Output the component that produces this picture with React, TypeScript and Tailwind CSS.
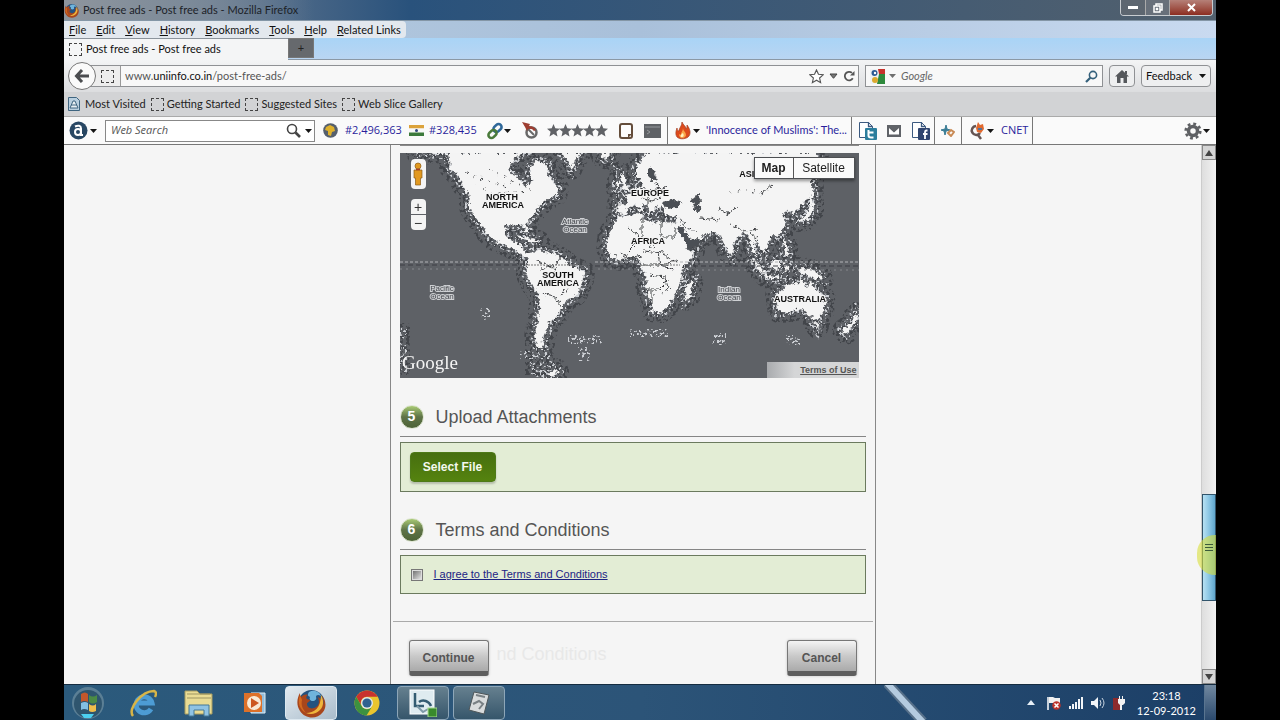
import type { ReactNode } from "react";

const UI = "font-['Lato','Open_Sans',sans-serif]";
const WIDE = "font-['Open_Sans','Noto_Sans',sans-serif]";
const ARIAL = "font-['Liberation_Sans',Arial,sans-serif]";

const menus = ["File", "Edit", "View", "History", "Bookmarks", "Tools", "Help", "Related Links"];
const bookmarks = ["Getting Started", "Suggested Sites", "Web Slice Gallery"];

function Caret({ className = "" }: { className?: string }) {
  return (
    <svg className={`shrink-0 ${className}`} width="7" height="4" viewBox="0 0 7 4">
      <path d="M0 0h7L3.500 4z" fill="#151515" />
    </svg>
  );
}

function Dashed() {
  return <span className="block h-[13px] w-[13px] shrink-0 border border-dashed border-[#444]" />;
}

function Magnifier({ color = "#444" }: { color?: string }) {
  return (
    <svg width="15" height="15" viewBox="0 0 15 15" fill="none" stroke={color}>
      <circle cx="6" cy="6" r="4.500" strokeWidth="1.600" />
      <path d="M9.500 9.500l4.500 4.500" strokeWidth="2.600" />
    </svg>
  );
}

function FirefoxLogo({ size }: { size: number }) {
  return (
    <svg width={size} height={size} viewBox="0 0 30 30">
      <circle cx="15.500" cy="15" r="13" fill="#24527f" />
      <path d="M13 4c5-3 11 0 12 4-3-2-5-1-5 1 1 2-1 4-3 4-3 0-4-2-3-4-2-1-3-2-1-5z" fill="#6fb4dc" />
      <path d="M4 5c0 2 0 3 1 4 2-2 4-3 7-2-2 1-2 3-1 4l3 1c0 2-3 2-3 4 0 4 5 6 9 3 4-2 3-7 2-10 4 2 5 5 5 8 1-4 0-7-2-10 5 4 6 12 2 17-6 8-18 7-23-1C0 17 1 10 4 5z" fill="#a8461c" />
      <path d="M25 7c3 5 3 11-1 15-4 4-9 5-14 3 8 0 15-5 15-18z" fill="#efb63c" />
      <path d="M4 7c-3 8 0 15 6 18-4-5-5-8-4-13z" fill="#d2691f" />
    </svg>
  );
}

function ChromeLogo() {
  return (
    <svg width="26" height="26" viewBox="0 0 26 26">
      <circle cx="13" cy="13" r="12.500" fill="#e9c52e" />
      <path d="M2.200 6.700A12.500 12.500 0 0 1 23.800 6.700H13A6.200 6.200 0 0 0 7.600 16z" fill="#c8332f" />
      <path d="M2.200 6.700A12.500 12.500 0 0 0 12.500 25.500L18.400 16A6.200 6.200 0 0 1 7.600 16z" fill="#3d9140" />
      <circle cx="13" cy="13" r="6" fill="#dfe7ea" />
      <circle cx="13" cy="13" r="4.600" fill="#2f6190" />
    </svg>
  );
}

function Flame({ size = 18 }: { size?: number }) {
  return (
    <svg width={size} height={size} viewBox="0 0 18 18">
      <path d="M8 0c1 3 4 4 4 7 1-1 1-2 1-4 3 4 4 8 2 11s-9 4-12 1C1 12 2 9 3 6c0 2 1 3 2 3C5 6 8 4 8 0z" fill="#dd4a1c" stroke="#a33d20" strokeWidth=".7" />
      <path d="M9 6c0 3 3 4 3 7 0 2-2 3-4 3s-3-2-3-4c1 1 2 1 2 0 0-2 2-3 2-6z" fill="#f9a548" />
      <path d="M9 11c1 2 1 4-1 4s-2-2 1-4z" fill="#fff1c2" />
    </svg>
  );
}

function SharePage({ color, children }: { color: string; children: ReactNode }) {
  return (
    <svg width="19" height="19" viewBox="0 0 19 19">
      <path d="M1.500 1.500h9l4 4v11h-13z" fill="#fff" stroke="#3c5a80" />
      <path d="M10.500 1v4.500h4" fill="none" stroke="#3c5a80" strokeWidth="1.300" />
      <rect x="7" y="7" width="12" height="12" rx="1" fill={color} />
      {children}
    </svg>
  );
}

function WorldMap() {
  return (
    <svg className="block h-[225px] w-full bg-[#5e6166]" viewBox="0 0 459 225" preserveAspectRatio="xMidYMid slice" role="img" aria-label="World map">
      <defs>
        <filter id="coast" x="0" y="0" width="459" height="225" filterUnits="userSpaceOnUse">
          <feTurbulence type="fractalNoise" baseFrequency="0.28" numOctaves="3" seed="4" result="n" />
          <feDisplacementMap in="SourceGraphic" in2="n" scale="7" xChannelSelector="R" yChannelSelector="G" />
        </filter>
        <filter id="speckle" x="0" y="0" width="459" height="225" filterUnits="userSpaceOnUse" colorInterpolationFilters="sRGB">
          <feTurbulence type="fractalNoise" baseFrequency="0.3" numOctaves="2" seed="9" />
          <feColorMatrix values="0 0 0 0 .26  0 0 0 0 .27  0 0 0 0 .29  12 0 0 0 -6" result="d" />
          <feComposite in="d" in2="SourceGraphic" operator="in" />
        </filter>
        <filter id="foam" x="0" y="0" width="459" height="225" filterUnits="userSpaceOnUse" colorInterpolationFilters="sRGB">
          <feTurbulence type="fractalNoise" baseFrequency="0.4" numOctaves="2" seed="21" />
          <feColorMatrix values="0 0 0 0 .8  0 0 0 0 .81  0 0 0 0 .83  0 12 0 0 -6.600" result="d" />
          <feComposite in="d" in2="SourceGraphic" operator="in" />
        </filter>
        <g id="west">
          <path d="M80 24L175 28L180 70L205 95L220 125L238 150L240 190L255 215L270 235L290 265L310 285L345 300L375 315L400 335L415 345L428 330L405 320L395 300L365 288L350 275L342 250L350 240L375 242L398 238L405 265L415 265L408 235L430 210L440 190L470 165L500 150L505 130L490 110L475 90L470 55L440 48L425 60L420 85L425 110L405 125L385 100L362 85L357 60L375 40L400 24z" />
          <path d="M515 24L528 40L545 72L555 50L572 24z" />
          <path d="M412 350L425 322L445 318L490 325L530 350L540 362L583 380L580 405L560 450L530 465L515 490L500 515L480 530L470 560L455 590L462 615L440 600L435 570L445 520L450 455L425 420L410 390z" />
          <path d="M632 24L660 24L655 42L638 40zM380 270L420 278L450 290L430 292L395 282zM470 690L500 672L505 680L485 698z" />
        </g>
        <g id="east">
          <path d="M-5 215L65 205L70 222L100 235L120 228L160 235L170 255L190 300L200 320L223 318L210 345L185 375L185 410L165 445L145 485L125 502L98 500L92 470L78 430L80 400L62 365L60 345L30 335L0 345L-25 340L-40 310L-35 270z" />
          <path d="M205 415L218 410L210 455L197 465L195 435z" />
          <path d="M-8 205L-8 178L20 178L22 165L12 150L35 145L45 130L70 118L60 108L48 95L48 70L65 40L85 24L590 24L600 60L570 120L570 150L545 180L520 208L512 195L490 205L495 245L480 268L450 278L445 300L430 325L415 300L403 292L412 335L400 325L390 290L380 265L365 265L345 290L335 332L322 320L305 275L285 262L250 262L250 275L215 308L190 312L160 240L172 215L135 210L130 192L108 182L102 200L85 205L80 180L65 175L72 198L60 200L45 180L25 190L15 208z" />
          <path d="M0 85L15 95L25 130L5 142L8 115zM-10 115L0 112L0 130L-10 132z" />
          <path d="M468 450L510 415L525 420L545 405L555 412L560 430L570 405L585 430L615 460L610 500L590 525L565 510L545 490L510 500L475 502zM583 535L598 535L592 550z" />
          <path d="M706 503L714 520L678 567L668 556L695 530z" />
          <path d="M392 340L415 355L440 388L425 385zM430 388L480 395L485 402L440 398zM452 350L482 345L475 378L455 372zM490 355L510 365L495 382zM528 368L570 372L605 392L608 405L570 395L540 385zM488 285L500 290L505 335L495 325z" />
          <path d="M570 110L580 130L580 200L560 225L528 230L562 205L570 180z" />
        </g>
      </defs>
      <g filter="url(#speckle)" stroke="#000" strokeWidth="64" strokeLinejoin="round">
        <use href="#west" transform="translate(-10 -8) scale(.3333)" />
        <use href="#east" transform="translate(220 -8) scale(.3333)" />
        <path stroke="none" d="M125 190h30v32h-30zM0 170h10v52H0z" />
      </g>
      <g filter="url(#foam)" stroke="#000" strokeWidth="30">
        <use href="#west" transform="translate(-10 -8) scale(.3333)" />
        <use href="#east" transform="translate(220 -8) scale(.3333)" />
        <path stroke="none" d="M120 198h30v8h-30zM168 182h34v9h-34zM178 194h12v14h-12zM230 176h38v8h-38zM312 180h14v12h-14zM386 182h14v10h-14zM80 155h10v12h-10zM0 175h7v45H0zM130 208h25v16h-25z" />
      </g>
      <g filter="url(#coast)" fill="#f4f4f4">
        <use href="#west" transform="translate(-10 -8) scale(.3333)" />
        <use href="#east" transform="translate(220 -8) scale(.3333)" />
        <g fill="#4c4f54">
          <path d="M262 49l12-3 8 3-3 5-14 1zM291 45l7-3 3 4-2 6 3 5-6 1-3-6zM248 14l6 3 3 10-5 1-4-6z" />
          <path d="M276 75l10 15 3 8 14-9-4-3-8 1-10-14z" />
        </g>
      </g>
      <g filter="url(#coast)" fill="none" stroke="#3f4144" strokeWidth="1">
        <path d="M228 75l26 20M242 64v20l-14 14M261 62v22h14v-10M243 98l20 2 12 10M258 100l2 12 12 4M240 112h25l12-5M250 122l15 2 4 14M245 136h14l8-8M252 136v14M262 140l8-6M220 100l8 6 14-3M140 116l16-4 6-8M142 140l12 3 8 12M160 142l8-6M148 113l8 3M136 108l10 4" />
        <path d="M238 34l12 4 16-4M240 45l12 3 14-6M248 42v12M256 30l4 16M330 72l14 6 14-2M352 80l6 9M318 55l10 6 10-8M300 65l20 2M280 65l6 10 12 4M362 40l10-8" />
        <path strokeDasharray="2 6" d="M66 20l40 14 14-12M75 32l22 8 34-2M90 16l30 16M215 102l12 6M218 106l14-6M330 40l16-4 18 6" />
      </g>
      <g stroke="#b2b4b7" fill="none">
        <path d="M0 109H125M195 109H240M280 109H459" strokeDasharray="3 2" />
        <path d="M0 112H122M195 113H240M285 113H459" stroke="#3c3f44" strokeDasharray="5 3" />
        <path d="M125 112H180M240 112H280" stroke="#777" strokeDasharray="2 1" />
        <path d="M0 116H123M198 116H238M284 117H459" stroke="#85888c" strokeDasharray="2 4" />
      </g>
      <g className="font-['Liberation_Sans',Arial,sans-serif]" fontSize="9" fontWeight="700" fill="#111" textAnchor="middle" stroke="#f4f4f4" strokeWidth="2" paintOrder="stroke">
        <text x="102" y="47">NORTH</text>
        <text x="103" y="55">AMERICA</text>
        <text x="158" y="125">SOUTH</text>
        <text x="158" y="133">AMERICA</text>
        <text x="250" y="43">EUROPE</text>
        <text x="248" y="91">AFRICA</text>
        <text x="350" y="24">ASIA</text>
        <text x="400" y="149">AUSTRALIA</text>
      </g>
      <g className="font-['Liberation_Sans',Arial,sans-serif]" fontSize="8" fill="#44474c" textAnchor="middle" stroke="#cfd1d4" strokeWidth="2" paintOrder="stroke">
        <text x="175" y="71">Atlantic</text>
        <text x="175" y="79">Ocean</text>
        <text x="42" y="138">Pacific</text>
        <text x="42" y="146">Ocean</text>
        <text x="329" y="139">Indian</text>
        <text x="329" y="147">Ocean</text>
      </g>
      <text x="2" y="216" className="font-['Liberation_Serif',serif]" fontSize="19" fill="#f4f4f4">Google</text>
    </svg>
  );
}

function SectionTitle({ number, children }: { number: number; children: ReactNode }) {
  return (
    <div className="flex h-10 items-center gap-3 border-b border-[#858585]">
      <span className="flex h-6 w-6 items-center justify-center rounded-full border border-[#dfe6d3] bg-linear-to-b from-[#a9cb74] via-[#5e7347] to-[#4d6337] text-[14px] font-bold text-white">{number}</span>
      <h2 className="text-[18px] leading-6 text-[#555]">{children}</h2>
    </div>
  );
}

function FormButton({ className, children }: { className: string; children: ReactNode }) {
  return (
    <button className={`h-9 rounded-[3px] border border-b-[5px] border-[#777] border-b-[#5e5e5e] bg-linear-to-b from-[#f4f4f4] via-[#c9c9c9] to-[#aaa] pt-1 shadow-[0_0_3px_#0003] ${className}`}>{children}</button>
  );
}

function TaskButton({ label, active, boxed, children }: { label: string; active?: boolean; boxed?: boolean; children: ReactNode }) {
  const look = active
    ? "border border-[#dce8f0] bg-linear-to-br from-[#e2eaf0] to-[#a9bccb] rounded-sm"
    : boxed
      ? "border border-[#8da6b8] bg-linear-to-b from-[#66808f] to-[#36566b] rounded-sm"
      : "";
  return (
    <button aria-label={label} className={`flex h-[34px] w-[52px] items-center justify-center ${look}`}>
      {children}
    </button>
  );
}

function BrowserChrome() {
  return (
    <header className={`${UI} text-[11px] text-[#111]`}>
      <div className="flex h-5 items-start justify-between bg-linear-to-r from-[#8b929b] via-[#29527c] via-30% to-[#52606d]">
        <div className="flex h-5 items-center gap-1 bg-linear-to-r from-[#8e959d] via-[#7c8a99] to-transparent pr-4 text-[#1c2228]">
          <FirefoxLogo size={15} />
          <span>Post free ads - Post free ads - Mozilla Firefox</span>
        </div>
        <div className="mr-[3px] flex h-4 overflow-hidden rounded-b-sm border border-t-0 border-[#c8ccd0] text-white">
          <button aria-label="Minimize" className="flex w-[25px] items-center justify-center border-r border-[#aaa] bg-[#5d6670]">
            <span className="h-[3px] w-[10px] bg-white" />
          </button>
          <button aria-label="Restore" className="flex w-6 items-center justify-center border-r border-[#aaa] bg-[#68707a]">
            <svg width="10" height="10" viewBox="0 0 10 10" fill="none" stroke="#fff" strokeWidth="1.500"><path d="M3 3V1h6v6H7M1 3h6v6H1zM3.500 5.500h1v1h-1z" /></svg>
          </button>
          <button aria-label="Close" className="flex w-[42px] items-center justify-center bg-linear-to-b from-[#b58078] to-[#8c2c20]">
            <svg width="9" height="9" viewBox="0 0 9 9" stroke="#fff" strokeWidth="2"><path d="M1 1l7 7M8 1L1 8" /></svg>
          </button>
        </div>
      </div>

      <div className="flex h-[18px] border-t border-[#8496a6] bg-linear-to-r from-[#b5cbe0] via-[#a9c0da] to-[#c9daf0]">
        <nav className="flex items-center gap-[10px] rounded-r bg-[#e3e8ee] pr-[5px] pl-[5px]">
          {menus.map((m) => (
            <button key={m} className="leading-4">
              <span className="underline">{m[0]}</span>
              {m.slice(1)}
            </button>
          ))}
        </nav>
      </div>

      <div className="flex h-[22px] border-b border-[#8b98a5] bg-linear-to-b from-[#a9d4f6] to-[#b9d5f2]">
        <div className="flex h-[22px] w-56 items-center gap-1 border-t border-[#8c949c] bg-[#f4f5f6] pl-[5px]">
          <Dashed />
          <span>Post free ads - Post free ads</span>
        </div>
        <button aria-label="New tab" className="h-5 w-[26px] border border-[#777] bg-[#66696d] leading-4 text-[#222]">+</button>
      </div>

      <div className="flex h-8 items-center bg-linear-to-b from-[#f3f4f5] to-[#dcdddf] pr-[5px] pl-1">
        <button aria-label="Back" className="z-10 -mr-3 flex h-7 w-7 shrink-0 items-center justify-center rounded-full border border-[#777] bg-[#fafafa]">
          <svg width="16" height="14" viewBox="0 0 16 14" fill="none" stroke="#4b4d50" strokeWidth="3"><path d="M8 1L2.500 7L8 13M3 7h12" /></svg>
        </button>
        <div className="flex h-[22px] flex-1 items-center border border-[#8f9194] bg-[#f8f8f8]">
          <span className="flex h-full w-9 items-center justify-end border-r border-[#999] bg-[#ededed] pr-[6px]"><Dashed /></span>
          <div className="flex-1 pl-1 text-[#555]">www.<span className="text-[#111]">uniinfo.co.in</span>/post-free-ads/</div>
          <div className="flex items-center gap-[5px] pr-[3px]">
            <svg width="15" height="15" viewBox="0 0 16 16" fill="#fff" stroke="#555" strokeWidth="1.200"><path d="M8 1l2.100 4.700 5 .5-3.800 3.400 1.100 5L8 12l-4.400 2.600 1.100-5L.9 6.200l5-.5z" /></svg>
            <svg width="9" height="6" viewBox="0 0 9 6" fill="#777" stroke="#444"><path d="M1 1h7L4.500 5.300z" /></svg>
            <svg width="12" height="12" viewBox="0 0 12 12" fill="none" stroke="#555" strokeWidth="1.800"><path d="M9.800 8.300A4.300 4.300 0 1 1 9 2.900" /><path d="M7 5.500h4.500V1z" fill="#555" stroke="none" /></svg>
          </div>
        </div>
        <div className="ml-[6px] flex h-[22px] w-[238px] items-center border border-[#8f9194] bg-[#f8f8f8] px-1">
          <svg width="15" height="15" viewBox="0 0 15 15">
            <rect width="15" height="15" fill="#eef2f5" />
            <path d="M8 0h7v5H9z" fill="#c8322c" /><path d="M9 5h6v10H7z" fill="#2f8a3d" /><circle cx="4.500" cy="4" r="3" fill="#2c5b94" /><circle cx="5" cy="11" r="3" fill="#dba92f" /><circle cx="5" cy="4" r="1.200" fill="#fff" />
          </svg>
          <Caret className="ml-1 opacity-60" />
          <input aria-label="Search Google" placeholder="Google" className="ml-[5px] min-w-0 flex-1 bg-transparent italic outline-none placeholder:text-[#666]" />
          <svg width="13" height="13" viewBox="0 0 13 13" fill="none" stroke="#35617c"><circle cx="8" cy="5" r="3.600" strokeWidth="1.600" /><path d="M5.300 7.700L1 12" strokeWidth="2.200" /></svg>
        </div>
        <button aria-label="Home" className="ml-[6px] flex h-[22px] w-[26px] items-center justify-center rounded-sm border border-[#8f9194] bg-[#eeeff0]">
          <svg width="14" height="13" viewBox="0 0 14 13" fill="#55585c"><path d="M7 0l7 6.500h-2V13H8.500V8h-3v5H2V6.500H0z" /><path d="M10 1h2v3h-2z" /></svg>
        </button>
        <button className="ml-[6px] flex h-[22px] w-[70px] items-center justify-between rounded-sm border border-[#8f9194] bg-[#eeeff0] px-1">
          Feedback <Caret />
        </button>
      </div>

      <div className="flex h-6 items-center bg-[#d2d3d5] pl-1 text-[#222]">
        <svg width="12" height="14" viewBox="0 0 12 14"><path d="M.5 .5h8l3 3v10H.5z" fill="#b9cfdf" stroke="#3f6580" /><path d="M2 11l3-7h2l3 7zM3 8h6" fill="#e7eef2" stroke="#3f6580" /></svg>
        <a href="#most-visited" className="ml-[5px]">Most Visited</a>
        {bookmarks.map((b) => (
          <a key={b} href="#bookmark" className="ml-[5px] flex items-center gap-[3px]"><Dashed />{b}</a>
        ))}
      </div>

      <div className="flex h-[29px] items-center border-t border-b border-t-[#aaa] border-b-[#777] bg-[#fafafa] pr-[6px] pl-[5px] text-[#2a1f9c]">
        <svg width="19" height="19" viewBox="0 0 19 19"><circle cx="9.500" cy="9.500" r="9" fill="#284763" /><circle cx="9" cy="11" r="3" fill="none" stroke="#fff" strokeWidth="2" /><path d="M6 5.500c3-1.500 6-1 6 2V14h2" fill="none" stroke="#fff" strokeWidth="2" /></svg>
        <Caret className="ml-[2px]" />
        <div className="ml-2 flex h-[22px] w-[210px] items-center border border-[#888] bg-white pr-[2px] pl-[5px]">
          <input aria-label="Web Search" placeholder="Web Search" className={`${WIDE} min-w-0 flex-1 bg-transparent italic outline-none placeholder:text-[#555]`} />
          <Magnifier />
          <Caret className="ml-1" />
        </div>
        <svg className="ml-2" width="15" height="15" viewBox="0 0 15 15"><circle cx="7.500" cy="7.500" r="7.300" fill="#555f6c" /><path d="M3 4l4-2 4 2 1 4-3 1-1 4-3-1V8L2 7z" fill="#dfb12c" /></svg>
        <a href="#rank" className={`${WIDE} ml-[7px] w-[60px] whitespace-nowrap`}>#2,496,363</a>
        <svg className="ml-1" width="15" height="11" viewBox="0 0 15 11"><path d="M0 0h15v3.500H0z" fill="#dca33b" /><path d="M0 3.500h15v4H0z" fill="#f8f8f8" /><path d="M0 7.500h15V11H0z" fill="#3c7a3b" /><circle cx="7.500" cy="5.500" r="1.500" fill="#34497e" /></svg>
        <a href="#local-rank" className={`${WIDE} ml-[5px] w-[49px] whitespace-nowrap`}>#328,435</a>
        <svg className="ml-2" width="18" height="18" viewBox="0 0 18 18" fill="none" strokeWidth="2.600"><rect x="8.500" y="1.500" width="6" height="9" rx="3" transform="rotate(45 11.500 6)" stroke="#2f689a" /><rect x="3.500" y="7.500" width="6" height="9" rx="3" transform="rotate(45 6.500 12)" stroke="#4a7a3b" /></svg>
        <Caret />
        <svg className="ml-[11px]" width="17" height="17" viewBox="0 0 17 17" fill="none"><circle cx="9.500" cy="10.500" r="5" stroke="#686868" strokeWidth="2.500" /><path d="M6 7l6 6" stroke="#686868" strokeWidth="2" /><path d="M0 0l8 2-1 2q5 0 7 4l-2 1Q10 6 6 7L5 9 3 5z" fill="#9e3e31" /></svg>
        <svg className="ml-2" width="61" height="13" viewBox="0 0 61 13" fill="#606266">
          {[0, 12, 24, 36, 48].map((x) => (
            <path key={x} transform={`translate(${x} 0)`} d="M6.500 0l1.800 4.300 4.700.4-3.600 3 1.100 4.800-4-2.500-4 2.500 1.100-4.800L0 4.700l4.700-.4z" />
          ))}
        </svg>
        <svg className="ml-[11px]" width="14" height="16" viewBox="0 0 14 16"><rect x="1" y="1" width="12" height="14" rx="2" fill="#fdfdfd" stroke="#644d3b" strokeWidth="2" /><path d="M9 15v-4h4" fill="#644d3b" /></svg>
        <svg className="ml-[11px]" width="17" height="14" viewBox="0 0 17 14"><rect width="17" height="14" fill="#5f6266" /><path d="M1 3h15M3 6l3 2-3 2" stroke="#95989b" fill="none" /></svg>
        <div className="ml-[6px] flex h-full items-center border-x border-[#777] pr-[3px] pl-[6px]">
          <Flame />
          <Caret className="ml-px" />
          <a href="#news" className="ml-[6px] w-[142px] whitespace-nowrap">'Innocence of Muslims': The...</a>
        </div>
        <div className="flex h-full items-center gap-[10px] border-r border-[#777] pr-1 pl-[6px]">
          <SharePage color="#2c7e9d"><path d="M10.500 9v5.500q0 2 2.500 2h2.500M10.500 11.500h5" stroke="#fff" strokeWidth="2" fill="none" /></SharePage>
          <svg width="14" height="12" viewBox="0 0 14 12"><rect width="14" height="12" fill="#606368" /><path d="M2 2.500l5 4.500 5-4.500v7H2z" fill="#fff" /><path d="M2 2l5 4.500L12 2" stroke="#606368" fill="none" strokeWidth="1.500" /></svg>
          <SharePage color="#30456f"><path d="M16.500 9.500h-1q-1.500 0-1.500 2V18M12 13h4.500" stroke="#fff" strokeWidth="1.800" fill="none" /></SharePage>
        </div>
        <div className="flex h-full w-[27px] items-center justify-center border-r border-[#777]">
          <svg width="14" height="12" viewBox="0 0 14 12" fill="none" strokeWidth="2"><path d="M0 5l4-1 1-4 1 4 3 1-4 1-1 4-1-4z" stroke="#397c94" strokeWidth="1" fill="#397c94" /><path d="M7 8l3-3 3 2-3 4z" stroke="#c98b56" /></svg>
        </div>
        <div className="flex h-full items-center border-r border-[#777] pr-1 pl-[7px]">
          <svg width="17" height="18" viewBox="0 0 17 18" fill="none"><path d="M7 4a4.500 4.500 0 1 0 4 7M9 13l3 4" stroke="#655452" strokeWidth="2.500" /><path d="M9 0l2 3 3-1 1 5-3 4-4-1-1-4z" fill="#e06a30" /><path d="M9 7h4" stroke="#54749b" strokeWidth="2" /></svg>
          <Caret className="ml-px" />
          <a href="#cnet" className={`${WIDE} ml-[7px]`}>CNET</a>
        </div>
        <button aria-label="Settings" className="ml-auto flex items-center gap-px">
          <svg width="18" height="18" viewBox="-9 -9 18 18" fill="none" stroke="#5f6164"><circle r="4.500" strokeWidth="3.500" /><circle r="7.300" strokeWidth="2.600" strokeDasharray="2.870 2.870" /></svg>
          <Caret />
        </button>
      </div>
    </header>
  );
}

function PostAdForm() {
  return (
    <div className={`${ARIAL} w-[486px] border-x border-[#888] px-[9px]`}>
      <div className="mr-[7px] border-t border-[#8a8a8a]" />
      <div className="relative mt-[7px] mr-[7px]">
        <WorldMap />
        <div className="absolute top-[6px] left-[11px] flex flex-col gap-[10px] text-[#333]">
          <button aria-label="Street view" className="flex h-[30px] w-[15px] items-center justify-center rounded-sm bg-[#f4f4f4]">
            <svg width="10" height="24" viewBox="0 0 10 24" fill="#e2991f" stroke="#8b5c17" strokeWidth=".7"><circle cx="5" cy="4" r="3" /><path d="M1 8h8v8H7.500v7h-5v-7H1z" /><path d="M3 7.500h4" stroke="#a5402a" strokeWidth="1.500" /></svg>
          </button>
          <div className="flex flex-col gap-px">
            <button aria-label="Zoom in" className="h-[15px] w-[15px] rounded-t-sm bg-[#f4f4f4] text-[14px] leading-[14px]">+</button>
            <button aria-label="Zoom out" className="h-[15px] w-[15px] rounded-b-sm bg-[#f4f4f4] text-[14px] leading-[14px]">−</button>
          </div>
        </div>
        <div className="absolute top-1 right-1 flex h-[22px] border border-[#4d4f52] bg-[#fafafa] text-[12px] text-[#222] shadow-[0_2px_3px_#0006]">
          <button className="w-[39px] border-r border-[#555] font-bold">Map</button>
          <button className="w-[60px]">Satellite</button>
        </div>
        <a href="#terms-of-use" className="absolute right-0 bottom-0 h-4 w-[92px] bg-linear-to-r from-[#a9abae] to-[#d5d6d7] to-30% pr-[2px] text-right text-[9px] leading-4 font-bold text-[#555] underline">Terms of Use</a>
      </div>

      <section className="mt-[19px]">
        <SectionTitle number={5}>Upload Attachments</SectionTitle>
        <div className="mt-[5px] flex h-[50px] items-center border border-[#6b7a5e] bg-[#e3edd5] px-[9px]">
          <button className="h-[30px] w-[86px] rounded-sm border border-[#4e7a18] bg-linear-to-b from-[#476f0f] to-[#55830f] text-[12px] font-bold text-[#f5f9ee] shadow-[0_2px_2px_#0003]">Select File</button>
        </div>
      </section>

      <section className="mt-[18px]">
        <SectionTitle number={6}>Terms and Conditions</SectionTitle>
        <div className="mt-[5px] flex h-[39px] items-center gap-[11px] border border-[#6b7a5e] bg-[#e3edd5] px-[10px] text-[11px]">
          <input id="agree" type="checkbox" className="h-3 w-3 appearance-none border border-[#777] bg-linear-to-br from-[#666] to-[#f2f2f2] shadow-[inset_0_0_0_1px_#ddd]" />
          <label htmlFor="agree"><a href="#terms" className="text-[#1c2384] underline">I agree to the Terms and Conditions</a></label>
        </div>
      </section>

      <div className="-mx-[7px] mt-[27px] flex items-start border-t border-[#aaa] px-4 pt-[18px] text-[12px] font-bold text-[#555]">
        <FormButton className="w-20">Continue</FormButton>
        <span aria-hidden="true" className="ml-2 text-[18px] leading-7 font-normal text-[#e8e8e8]">nd Conditions</span>
        <FormButton className="ml-auto w-[70px]">Cancel</FormButton>
      </div>
    </div>
  );
}

function Taskbar() {
  return (
    <footer className={`${UI} relative flex h-9 shrink-0 items-center overflow-hidden border-t border-[#152c40] bg-linear-to-r from-[#2b5a7c] via-[#2c5478] to-[#1c3f67] text-white`}>
      <svg className="absolute top-0 left-[820px]" width="50" height="36" viewBox="0 0 50 36"><path d="M3-2L39 37" stroke="#58718a" strokeWidth="10" /><path d="M3-2L39 37" stroke="#b4cbe0" strokeWidth="6" /></svg>
      <button aria-label="Start" className="ml-[7px] mr-3">
        <svg width="34" height="34" viewBox="0 0 34 34"><circle cx="17" cy="17" r="16" fill="#5b7f95" /><circle cx="17" cy="18" r="14" fill="#2f556e" /><path d="M10 8q4-3 7 0v8q-4-2-7 0z" fill="#c4572c" /><path d="M18 9q4 3 8 0v7q-4 3-8 0z" fill="#4b8a45" /><path d="M10 17q4-2 7 0v7q-4-2-7 0z" fill="#83bfe2" /><path d="M18 18q4 3 7 0v7q-4 2-7 0z" fill="#efbd4c" /><path d="M10 28h13l-3 4h-7z" fill="#4cd0f0" /></svg>
      </button>
      <div className="flex gap-1">
        <TaskButton label="Internet Explorer">
          <svg width="28" height="30" viewBox="0 0 28 30" fill="none"><path d="M22 21a8 8 0 1 1 1-6H8" stroke="#4d9cd4" strokeWidth="5" /><path d="M4 28C-2 21 13 3 25 3c3 1 2 4 1 6" stroke="#d8b547" strokeWidth="2.500" /></svg>
        </TaskButton>
        <TaskButton label="Explorer">
          <svg width="30" height="28" viewBox="0 0 30 28"><path d="M1 2h12l3 3h12v20H1z" fill="#e9dc94" stroke="#a79c61" /><path d="M3 5h23M3 9h24" stroke="#9d9562" /><path d="M5 27V16h20v11h-5v-6H10v6z" fill="#8fc3e3" stroke="#447896" /></svg>
        </TaskButton>
        <TaskButton label="Media Player">
          <svg width="24" height="24" viewBox="0 0 24 24"><path d="M8 2h14v20H8z" fill="#92bddb" stroke="#e0edf5" /><path d="M1 2h15l3 3v16H1z" fill="#dd7129" /><circle cx="11" cy="12" r="7" fill="#f8ead6" /><path d="M8 7l8 5-8 5z" fill="#cc5820" /></svg>
        </TaskButton>
        <TaskButton label="Firefox" active><FirefoxLogo size={30} /></TaskButton>
        <TaskButton label="Chrome"><ChromeLogo /></TaskButton>
        <TaskButton label="Screen recorder" boxed>
          <svg width="28" height="28" viewBox="0 0 28 28"><rect x="1" y="1" width="24" height="24" fill="#dfebf0" stroke="#fff" /><path d="M6 4v13h9M10 13c4-3 10-1 12 4" fill="none" stroke="#345c72" strokeWidth="2.500" /><path d="M8 17l6 6 5-3" fill="none" stroke="#7e9aa8" strokeWidth="2" /><rect x="19" y="19" width="9" height="9" fill="#398a2c" stroke="#a9dc91" /></svg>
        </TaskButton>
        <TaskButton label="Notepad" boxed>
          <svg width="24" height="26" viewBox="0 0 24 26"><path d="M7 2l15 3-5 19-15-4z" fill="#d9dcdd" stroke="#4e5659" /><path d="M9 5l9 2M6 14l6-3 4 3-4 5" stroke="#798084" strokeWidth="2" fill="none" /></svg>
        </TaskButton>
      </div>

      <div className="ml-auto flex items-center gap-2">
        <svg width="8" height="5" viewBox="0 0 8 5"><path d="M4 0l4 5H0z" fill="#e8f0f7" /></svg>
        <svg className="ml-1" width="14" height="14" viewBox="0 0 14 14"><path d="M1 1v13" stroke="#fff" strokeWidth="1.500" /><path d="M2 1h4l2 1h5v6H8L6 7H2z" fill="#f1f1f1" /><circle cx="9.500" cy="9.500" r="4.200" fill="#bd342c" /><path d="M7.500 7.500l4 4M11.500 7.500l-4 4" stroke="#fff" strokeWidth="1.500" /></svg>
        <svg width="14" height="12" viewBox="0 0 14 12" fill="#f2f5f8"><path d="M0 9h2v3H0zM3 7h2v5H3zM6 5h2v7H6zM9 2h2v10H9zM12 0h2v12h-2z" /></svg>
        <svg width="14" height="14" viewBox="0 0 14 14"><path d="M0 5h3l4-4v12L3 9H0z" fill="#f2f5f8" /><path d="M9 4q2 3 0 6M11 2q4 5 0 10" stroke="#c8d5e1" fill="none" /></svg>
        <svg width="12" height="14" viewBox="0 0 12 14"><rect y="2" width="7" height="12" fill="#8c2b2d" /><path d="M5 3h7v4l-2 2H9v5H7V9L5 7zM6 0h1v3H6zM9 0h1v3H9z" fill="#f3f3f3" /></svg>
        <time className="ml-1 text-center text-[11px] leading-[15px]">23:18<br />12-09-2012</time>
        <button aria-label="Show desktop" className="h-9 w-3 border-l border-[#5a7590] bg-linear-to-b from-[#7289a0] to-[#29486c]" />
      </div>
    </footer>
  );
}

export default function App() {
  return (
    <div className="bg-black px-16">
      <div className="flex h-screen flex-col overflow-hidden bg-[#f5f5f5]">
        <BrowserChrome />
        <main className="relative flex min-h-0 flex-1 overflow-hidden">
          <div className="flex flex-1 justify-center overflow-hidden">
            <PostAdForm />
          </div>
          <div className="flex w-[15px] shrink-0 flex-col border-l border-[#ccc] bg-linear-to-r from-[#dedede] to-[#f2f2f2]">
            <button aria-label="Scroll up" className="flex h-[15px] items-center justify-center border border-[#888] bg-[#d5d5d5]">
              <svg width="8" height="8" viewBox="0 0 8 8"><path d="M4 1l4 6H0z" fill="#444" /></svg>
            </button>
            <div className="flex-[335]" />
            <div className="flex flex-[105] items-center justify-center border border-[#31546b] bg-linear-to-r from-[#b7e1f3] via-[#8bc6e4] to-[#5fa5cb]">
              <svg className="z-10" width="8" height="7" viewBox="0 0 8 7" stroke="#3b5a3a"><path d="M0 .5h8M0 3.500h8M0 6.500h8" /></svg>
            </div>
            <div className="flex-[68]" />
            <button aria-label="Scroll down" className="flex h-[15px] items-center justify-center border border-[#888] bg-[#d5d5d5]">
              <svg width="8" height="8" viewBox="0 0 8 8"><path d="M4 7l4-6H0z" fill="#444" /></svg>
            </button>
          </div>
          <span className="absolute top-[390px] -right-[17px] h-10 w-9 rounded-full bg-[#d9e03a]/60" />
        </main>
        <Taskbar />
      </div>
    </div>
  );
}
